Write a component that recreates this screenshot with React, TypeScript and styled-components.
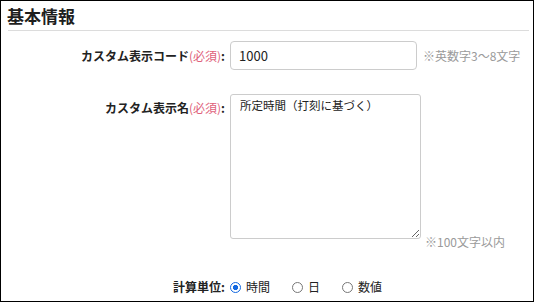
import styled, { createGlobalStyle } from 'styled-components';

const GlobalStyle = createGlobalStyle`
  html, body {
    margin: 0;
    padding: 0;
    background: #ffffff;
  }
  body {
    font-family: "Noto Sans CJK JP", "Noto Sans", sans-serif;
    color: #222222;
  }
`;

const Frame = styled.section`
  box-sizing: border-box;
  width: 534px;
  height: 302px;
  border: 1px solid #000000;
  background: #ffffff;
  overflow: hidden;
`;

const Heading = styled.h2`
  margin: 0 0 3px;
  padding: 4px 0 0 6px;
  font-size: 17px;
  line-height: 22px;
  font-weight: 700;
  color: #1e1e1e;
`;

const Divider = styled.hr`
  margin: 0 4px 0 7px;
  border: 0;
  height: 1px;
  background: #dcdcdc;
`;

const FormRow = styled.div<{ $top: number; $align?: string }>`
  display: grid;
  grid-template-columns: 224px 1fr;
  column-gap: 5px;
  align-items: ${(p) => p.$align ?? 'center'};
  margin-top: ${(p) => p.$top}px;
`;

const Label = styled.label<{ $padTop?: number }>`
  justify-self: end;
  padding-top: ${(p) => p.$padTop ?? 0}px;
  font-size: 12px;
  line-height: 16px;
  font-weight: 700;
  color: #222222;
  white-space: nowrap;
`;

const Required = styled.span`
  color: #e0607a;
  font-weight: 400;
`;

const Field = styled.div<{ $align?: string }>`
  display: flex;
  align-items: ${(p) => p.$align ?? 'center'};
`;

const TextInput = styled.input`
  box-sizing: border-box;
  width: 187px;
  height: 29px;
  padding: 0 8px;
  border: 1px solid #cccccc;
  border-radius: 4px;
  font-family: inherit;
  font-size: 13px;
  color: #222222;
  outline: none;
`;

const TextArea = styled.textarea`
  box-sizing: border-box;
  width: 191px;
  height: 145px;
  padding: 2px 9px;
  border: 1px solid #cccccc;
  border-radius: 3px;
  font-family: inherit;
  font-size: 11.5px;
  line-height: 16px;
  color: #222222;
  outline: none;
  resize: both;
`;

const Hint = styled.span<{ $left: number; $drop?: number }>`
  margin-left: ${(p) => p.$left}px;
  margin-bottom: ${(p) => -(p.$drop ?? 0)}px;
  font-size: 12px;
  line-height: 16px;
  color: #9a9a9a;
  white-space: nowrap;
`;

const RadioGroup = styled.div`
  display: flex;
  align-items: center;
  height: 20px;
`;

const RadioOption = styled.label<{ $first?: boolean }>`
  display: flex;
  align-items: center;
  gap: 5px;
  margin-left: ${(p) => (p.$first ? 0 : 22)}px;
  font-size: 12px;
  line-height: 16px;
  color: #222222;
`;

const Radio = styled.input`
  appearance: none;
  box-sizing: border-box;
  width: 11px;
  height: 11px;
  margin: 0;
  border: 1px solid #777777;
  border-radius: 50%;
  background: #ffffff;

  &:checked {
    border: 1.5px solid #1167e0;
    background: radial-gradient(circle, #1167e0 0 2.4px, #ffffff 2.9px);
  }
`;

const units = ['時間', '日', '数値'];

export default function App() {
  return (
    <>
      <GlobalStyle />
      <Frame>
        <Heading>基本情報</Heading>
        <Divider />

        <FormRow $top={10}>
          <Label>
            カスタム表示コード<Required>(必須)</Required>:
          </Label>
          <Field>
            <TextInput defaultValue="1000" />
            <Hint $left={6}>※英数字3〜8文字</Hint>
          </Field>
        </FormRow>

        <FormRow $top={24} $align="start">
          <Label $padTop={6}>
            カスタム表示名<Required>(必須)</Required>:
          </Label>
          <Field $align="flex-end">
            <TextArea defaultValue="所定時間（打刻に基づく）" />
            <Hint $left={4} $drop={11}>
              ※100文字以内
            </Hint>
          </Field>
        </FormRow>

        <FormRow $top={38}>
          <Label>計算単位:</Label>
          <RadioGroup>
            {units.map((u, i) => (
              <RadioOption key={u} $first={i === 0}>
                <Radio type="radio" name="unit" defaultChecked={i === 0} />
                {u}
              </RadioOption>
            ))}
          </RadioGroup>
        </FormRow>
      </Frame>
    </>
  );
}
